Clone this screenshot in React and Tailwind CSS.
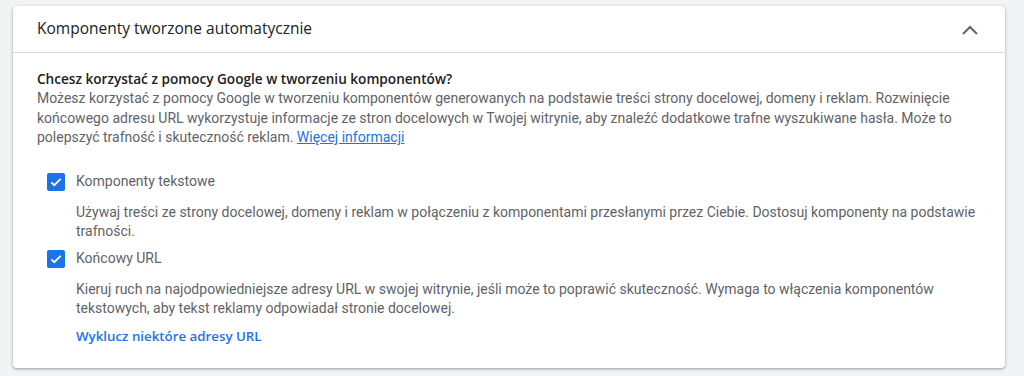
function Checkbox() {
  return (
    <span className="flex h-[18px] w-[18px] shrink-0 items-center justify-center rounded-[2px] bg-[#1a73e8]">
      <svg width="14" height="14" viewBox="0 0 24 24" fill="none">
        <path d="M4 12.5l5 5L20 6.5" stroke="#fff" strokeWidth="3" />
      </svg>
    </span>
  );
}

function Option({ label, children }) {
  return (
    <div>
      <div className="flex h-[26px] items-center">
        <div className="flex w-[39px] pl-[10px]">
          <Checkbox />
        </div>
        <span className="text-[14px] text-[#5f6368]">{label}</span>
      </div>
      <div className="mt-[8px] pl-[39px] text-[14px] leading-[19.5px] text-[#5f6368]">
        {children}
      </div>
    </div>
  );
}

export default function App() {
  return (
    <div
      className="min-h-[376px] bg-[#f1f3f4] pt-[6px] pl-[13px] pr-[19px]"
      style={{ fontFamily: "Roboto, 'Liberation Sans', sans-serif" }}
    >
      <div className="rounded-[4px] bg-white shadow-[0_1px_2px_rgba(60,64,67,0.3),0_1px_3px_1px_rgba(60,64,67,0.15)]">
        {/* Header */}
        <div className="flex h-[47px] items-center justify-between border-b border-[#dadce0] pl-[24px] pr-[27px]">
          <h2
            className="text-[15.5px] text-[#202124]"
            style={{ fontFamily: "'Open Sans', Roboto, sans-serif" }}
          >
            Komponenty tworzone automatycznie
          </h2>
          <svg width="16" height="10" viewBox="0 0 16 10" fill="none" className="mt-[1px]">
            <path d="M1 9L8 2l7 7" stroke="#5f6368" strokeWidth="2" />
          </svg>
        </div>

        {/* Body */}
        <div className="pl-[24px] pr-[24px] pt-[16px] pb-[22px]">
          <p
            className="text-[13.6px] font-semibold leading-[20px] text-[#202124]"
            style={{ fontFamily: "'Open Sans', Roboto, sans-serif" }}
          >
            Chcesz korzystać z pomocy Google w tworzeniu komponentów?
          </p>
          <p className="text-[14px] leading-[19.5px] text-[#5f6368]">
            Możesz korzystać z pomocy Google w tworzeniu komponentów generowanych na podstawie treści strony docelowej, domeny i reklam. Rozwinięcie końcowego adresu URL wykorzystuje informacje ze stron docelowych w Twojej witrynie, aby znaleźć dodatkowe trafne wyszukiwane hasła. Może to polepszyć trafność i skuteczność reklam.{" "}
            <a className="text-[#1a73e8] underline">Więcej informacji</a>
          </p>

          <div className="mt-[21px] flex flex-col gap-[4px]">
            <Option label="Komponenty tekstowe">
              Używaj treści ze strony docelowej, domeny i reklam w połączeniu z komponentami przesłanymi przez Ciebie. Dostosuj komponenty na podstawie trafności.
            </Option>
            <Option label="Końcowy URL">
              Kieruj ruch na najodpowiedniejsze adresy URL w swojej witrynie, jeśli może to poprawić skuteczność. Wymaga to włączenia komponentów tekstowych, aby tekst reklamy odpowiadał stronie docelowej.
              <div
                className="mt-[8px] text-[13.3px] font-semibold text-[#1a73e8]"
                style={{ fontFamily: "'Open Sans', Roboto, sans-serif" }}
              >
                Wyklucz niektóre adresy URL
              </div>
            </Option>
          </div>
        </div>
      </div>
    </div>
  );
}
